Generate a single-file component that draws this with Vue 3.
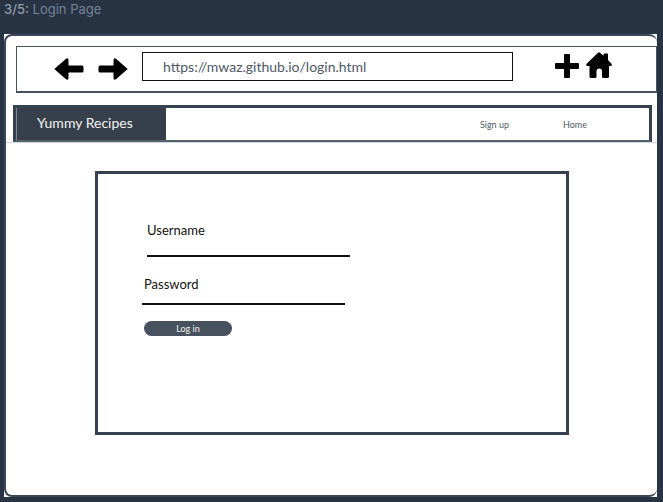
<script setup>
import { ref } from 'vue'

const address = ref('https://mwaz.github.io/login.html')
const username = ref('')
const password = ref('')
</script>

<template>
  <div class="page">
    <h1 class="caption"><b>3/5:</b> Login Page</h1>
    <div class="backing">
      <main class="frame">
        <div class="toolbar">
          <button class="tool" type="button" aria-label="Back">
            <svg width="30" height="22" viewBox="0 0 30 22">
              <path d="M.3 11 12 .8Q14.500 -.5 14.500 2V7.500H28Q29.500 7.500 29.500 9V13Q29.500 14.500 28 14.500H14.500V20Q14.500 22.500 12 21.200Z" />
            </svg>
          </button>
          <button class="tool" type="button" aria-label="Forward">
            <svg width="30" height="22" viewBox="0 0 30 22">
              <path d="M29.700 11 18 .8Q15.500 -.5 15.500 2V7.500H2Q.5 7.500 .5 9V13Q.5 14.500 2 14.500H15.500V20Q15.500 22.500 18 21.200Z" />
            </svg>
          </button>
          <input v-model="address" class="address" type="text" aria-label="Address" />
          <button class="tool add" type="button" aria-label="New tab">
            <svg width="24" height="24" viewBox="0 0 24 24">
              <path d="M10 0H14Q15 0 15 1V9H23Q24 9 24 10V14Q24 15 23 15H15V23Q15 24 14 24H10Q9 24 9 23V15H1Q0 15 0 14V10Q0 9 1 9H9V1Q9 0 10 0Z" />
            </svg>
          </button>
          <button class="tool house" type="button" aria-label="Home page">
            <svg width="26" height="26" viewBox="0 0 26 26">
              <path d="M12 .7Q13 0 14 .7L17.500 3.800V2.500Q17.500 1.500 18.500 1.500H21Q22 1.500 22 2.500V8L25.500 11.800Q26.500 14 24.500 14H23V24.500Q23 26 21.500 26H17.500Q16 26 16 24.500V19Q16 16.500 13.200 16.500Q10.500 16.500 10.500 19V24.500Q10.500 26 9 26H5Q3.500 26 3.500 24.500V14H1.500Q-.5 14 .6 11.800Z" />
            </svg>
          </button>
        </div>

        <div class="band">
          <header class="site">
            <div class="brand">Yummy Recipes</div>
            <nav class="links">
              <a href="#signup">Sign up</a>
              <a href="#home">Home</a>
            </nav>
          </header>
        </div>

        <form class="login" @submit.prevent>
          <div class="field user">
            <label for="username">Username</label>
            <input id="username" v-model="username" type="text" />
          </div>
          <div class="field pass">
            <label for="password">Password</label>
            <input id="password" v-model="password" type="password" />
          </div>
          <button class="submit" type="submit">Log in</button>
        </form>
      </main>
    </div>
  </div>
</template>

<style>
body {
  background: #283444;
}
</style>

<style scoped>
.page {
  box-sizing: border-box;
  min-height: 100vh;
  padding: 0 6px 6px 4px;
  background: #283444;
  font-family: Lato, "Liberation Sans", sans-serif;
}

.page * {
  box-sizing: border-box;
}

.caption {
  margin: 0;
  height: 34px;
  font: 400 13px/18px Inter, "Liberation Sans", sans-serif;
  color: #758294;
}

.caption b {
  font-weight: 500;
  color: #929dab;
}

.backing {
  background: #fff;
}

.frame {
  padding: 10px 0 60px 9px;
  border: 2px solid #3c4857;
  border-right: 0;
  border-radius: 8px;
  background: #fff;
}

.toolbar {
  display: flex;
  align-items: flex-start;
  height: 47px;
  margin-left: 1px;
  padding: 5px 44px 0 37px;
  border: 1px solid #46535f;
  border-bottom-width: 2px;
}

.tool {
  display: block;
  flex: none;
  margin: 6px 14px 0 0;
  padding: 0;
  border: 0;
  background: none;
}

.tool svg {
  display: block;
}

.address {
  flex: 1;
  min-width: 0;
  height: 29px;
  margin-right: 42px;
  padding: 0 20px;
  border: 1px solid #111;
  border-radius: 0;
  background: #fff;
  font: 14px/20px Lato, sans-serif;
  color: #4e5966;
}

.tool.add {
  margin: 2px 7px 0 0;
}

.tool.house {
  margin: 0;
}

.band {
  margin: 12px 0 0 -9px;
  padding: 0 5px 0 7px;
  border-bottom: 1px solid #d3d8df;
}

.site {
  display: flex;
  height: 37px;
  border: 3px solid #374250;
  border-bottom: 2px solid #56616e;
}

.brand {
  width: 150px;
  padding-left: 20px;
  border-left: 1px solid #7f8791;
  background: #363f4a;
  font-size: 14px;
  line-height: 30px;
  color: #f4f5f6;
}

.links {
  display: flex;
  flex: 1;
  gap: 54px;
  justify-content: flex-end;
  padding-right: 62px;
  font-size: 9px;
  line-height: 34px;
}

.links a {
  color: #4e5966;
  text-decoration: none;
}

.login {
  margin: 28px 88px 0 80px;
  padding: 46px 44px 96px;
  border: 3px solid #374250;
}

.field {
  width: 203px;
}

.field label {
  display: block;
  font-size: 13px;
  line-height: 20px;
  color: #111;
}

.field input {
  display: block;
  width: 100%;
  padding: 0;
  border: 0;
  border-bottom: 2px solid #111;
  border-radius: 0;
  background: none;
  font: 12px/14px Lato, sans-serif;
}

.user {
  margin-left: 5px;
}

.user input {
  height: 17px;
}

.pass {
  margin-top: 17px;
}

.pass input {
  height: 11px;
}

.pass label {
  padding-left: 2px;
}

.submit {
  display: block;
  width: 88px;
  height: 15px;
  margin: 16px 0 0 2px;
  padding: 0;
  border: 0;
  border-radius: 8px;
  background: #48515e;
  font: 9px/15px Lato, sans-serif;
  color: #f0f1f3;
}
</style>
